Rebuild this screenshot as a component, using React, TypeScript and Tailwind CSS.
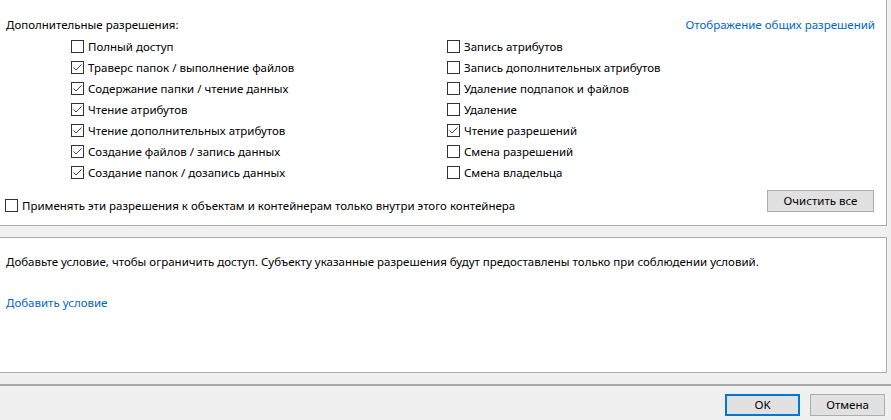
import React from 'react';

// Advanced permissions page of a Windows security dialog (ru-RU).

const LEFT: { label: string; checked: boolean }[] = [
  { label: 'Полный доступ', checked: false },
  { label: 'Траверс папок / выполнение файлов', checked: true },
  { label: 'Содержание папки / чтение данных', checked: true },
  { label: 'Чтение атрибутов', checked: true },
  { label: 'Чтение дополнительных атрибутов', checked: true },
  { label: 'Создание файлов / запись данных', checked: true },
  { label: 'Создание папок / дозапись данных', checked: true },
];

const RIGHT: { label: string; checked: boolean }[] = [
  { label: 'Запись атрибутов', checked: false },
  { label: 'Запись дополнительных атрибутов', checked: false },
  { label: 'Удаление подпапок и файлов', checked: false },
  { label: 'Удаление', checked: false },
  { label: 'Чтение разрешений', checked: true },
  { label: 'Смена разрешений', checked: false },
  { label: 'Смена владельца', checked: false },
];

function Box({ checked }: { checked: boolean }) {
  return (
    <span className="flex h-[13px] w-[13px] shrink-0 items-center justify-center border border-[#333333] bg-white">
      {checked && (
        <svg width="11" height="11" viewBox="0 0 11 11" aria-hidden>
          <polyline points="1.5,5.5 4,8 9.5,2.5" fill="none" stroke="#444444" strokeWidth="1" />
        </svg>
      )}
    </span>
  );
}

function Check({ label, checked }: { label: string; checked: boolean }) {
  return (
    <label className="flex h-[21px] items-center gap-[4px]">
      <Box checked={checked} />
      <span className="whitespace-nowrap">{label}</span>
    </label>
  );
}

export default function App() {
  return (
    <div
      className="flex h-[420px] w-[891px] flex-col overflow-hidden bg-[#f0f0f0] text-[11.5px] leading-[16px] text-black"
      style={{ fontFamily: '"Segoe UI", "Noto Sans", sans-serif' }}
    >
      {/* Permissions panel */}
      <section className="flex h-[226px] w-[887px] flex-col border-r border-b border-[#adadad] bg-white">
        <div className="flex items-center justify-between pt-[17px] pr-[11px] pl-[6px]">
          <span>Дополнительные разрешения:</span>
          <a className="text-[#0066cc]">Отображение общих разрешений</a>
        </div>

        <div className="mt-[3px] ml-[71px] grid grid-cols-[376px_1fr]">
          <div className="flex flex-col">
            {LEFT.map((p) => (
              <Check key={p.label} {...p} />
            ))}
          </div>
          <div className="flex flex-col">
            {RIGHT.map((p) => (
              <Check key={p.label} {...p} />
            ))}
          </div>
        </div>

        <div className="mt-[7px] flex items-end justify-between pr-[12px] pl-[5px]">
          <label className="flex h-[13px] items-center gap-[4px]">
            <Box checked={false} />
            <span className="whitespace-nowrap">
              Применять эти разрешения к объектам и контейнерам только внутри этого контейнера
            </span>
          </label>
          <button className="h-[22px] w-[107px] border border-[#adadad] bg-[#e1e1e1]">Очистить все</button>
        </div>
      </section>

      {/* Conditions panel */}
      <section className="mt-[11px] h-[136px] w-[887px] border-t border-r border-b border-[#adadad] bg-white pt-[16px] pl-[6px]">
        <p>
          Добавьте условие, чтобы ограничить доступ. Субъекту указанные разрешения будут предоставлены только при
          соблюдении условий.
        </p>
        <a className="mt-[25px] block w-fit text-[#0066cc]">Добавить условие</a>
      </section>

      {/* Footer */}
      <div className="mt-[11px] h-[2px] w-full bg-[#a9a9a9]" />
      <div className="flex justify-end gap-[10px] pt-[8px] pr-[6px]">
        <button className="h-[22px] w-[75px] border-2 border-[#0078d7] bg-[#e1e1e1]">OK</button>
        <button className="h-[22px] w-[75px] border border-[#adadad] bg-[#e1e1e1]">Отмена</button>
      </div>
    </div>
  );
}
